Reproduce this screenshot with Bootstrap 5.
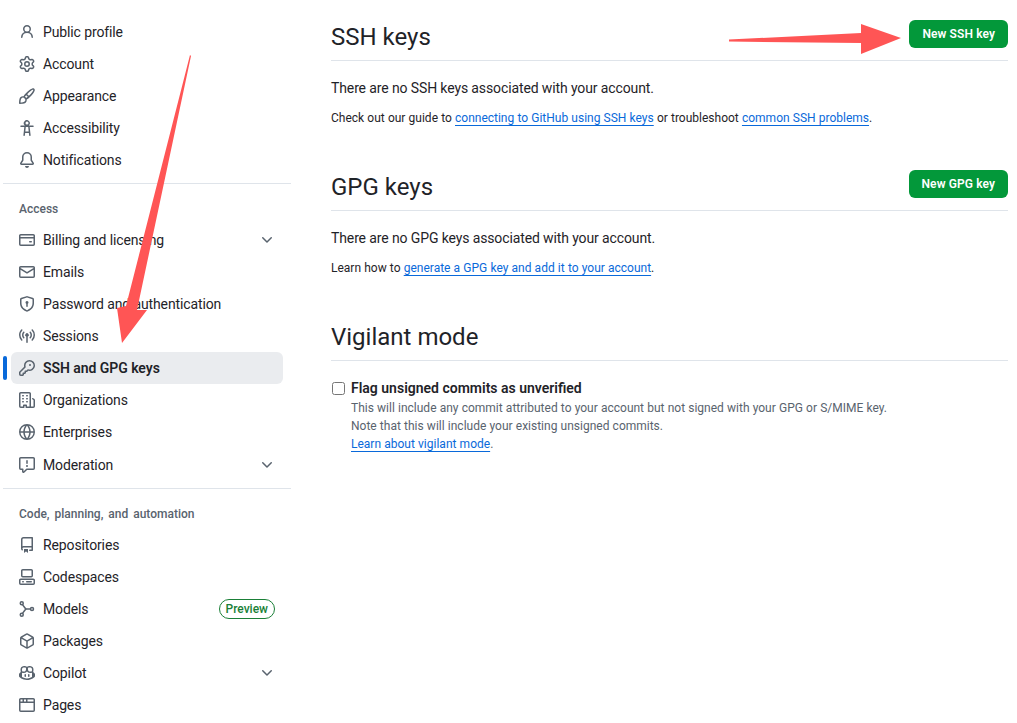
<!DOCTYPE html>
<html lang="en">
<head>
    <title>SSH and GPG keys</title>
    <meta charset="utf-8">
    <meta name="viewport" content="width=device-width, initial-scale=1">
    <link href="https://cdn.jsdelivr.net/npm/bootstrap@5.3.0/dist/css/bootstrap.min.css" rel="stylesheet">
    <style>
    body {
        font-family: Roboto, "Liberation Sans", sans-serif;
        font-size: 14px;
        line-height: 21px;
        letter-spacing: -0.12px;
        color: #1f2328;
        background: #fff;
    }
    .page-wrap {
        position: relative;
        height: 723px;
        overflow: hidden;
    }
    .side-col {
        width: 288px;
        margin-left: 3px;
        padding-top: 16px;
        flex: none;
    }
    .main-col {
        margin-left: 40px;
        margin-right: 9px;
        padding-top: 20px;
        min-width: 0;
        flex: 1;
    }
    .side-item {
        height: 32px;
        margin: 0 8px;
        padding: 0 8px;
        border-radius: 6px;
        color: #1f2328;
        text-decoration: none;
        position: relative;
    }
    .side-item svg.side-ico { fill: #59636e; flex: none; margin-right: 8px; }
    .side-item svg.side-chev { fill: #59636e; margin-left: auto; }
    .side-item.side-on { background: #eaecef; font-weight: 600; letter-spacing: -0.05px; }
    .side-item.side-on::before {
        content: "";
        position: absolute;
        left: -8px;
        top: 4px;
        width: 4px;
        height: 24px;
        border-radius: 6px;
        background: #0969da;
    }
    .side-gap { margin-top: 1px; }
    .side-rule { height: 1px; background: #dfe4ea; margin: 7px 0 0; }
    .side-head {
        font-size: 12px;
        font-weight: 500;
        line-height: 18px;
        letter-spacing: 0;
        word-spacing: 2px;
        color: #59636e;
        padding: 16px 16px 6px;
    }
    .side-preview {
        margin-left: auto;
        height: 20px;
        line-height: 18px;
        padding: 0 6px;
        border: 1px solid #1a7f37;
        border-radius: 20px;
        color: #1a7f37;
        font-size: 12px;
        font-weight: 500;
        letter-spacing: 0;
    }
    .sec-head {
        padding-bottom: 12px;
        border-bottom: 1px solid #dfe4ea;
    }
    .sec-head h2 {
        font-size: 24px;
        line-height: 28px;
        font-weight: 400;
        letter-spacing: 0;
        margin: 0 0 -3px;
        padding-top: 3px;
    }
    .sec-btn {
        height: 28px;
        line-height: 28px;
        padding: 0 13px;
        border: 0;
        border-radius: 6px;
        background: #03983a;
        color: #fff;
        font-size: 12px;
        font-weight: 600;
        letter-spacing: .1px;
    }
    .sec-text { margin: 17px 0 0; }
    .sec-sub { font-size: 12px; line-height: 18px; letter-spacing: 0; word-spacing: .2px; margin: 10px 0 0; }
    .sec-link {
        color: #0969da;
        text-decoration: underline;
        text-underline-offset: 3px;
    }
    .sec-two { margin-top: 43px; }
    .sec-three { margin-top: 43px; }
    .vig-row { margin-top: 17px; }
    .vig-check {
        width: 13px;
        height: 13px;
        margin: 4px 6px 0 1px;
        flex: none;
    }
    .vig-label { font-weight: 600; letter-spacing: 0; }
    .vig-note { font-size: 12px; line-height: 18px; letter-spacing: 0; word-spacing: .2px; color: #59636e; }
    .mark-layer {
        position: absolute;
        left: 0;
        top: 0;
        pointer-events: none;
    }
    </style>
</head>
<body>
<svg width="0" height="0" class="position-absolute">
    <defs>
        <path id="i-chev" d="M12.78 5.22a.749.749 0 0 1 0 1.06l-4.25 4.25a.749.749 0 0 1-1.06 0L3.22 6.28a.749.749 0 1 1 1.06-1.06L8 8.939l3.72-3.719a.749.749 0 0 1 1.06 0Z"/>
    </defs>
</svg>
<div class="page-wrap d-flex">
    <nav class="side-col">
        <a class="side-item d-flex align-items-center" href="#"><svg class="side-ico" width="16" height="16" viewBox="0 0 16 16"><path d="M10.561 8.073a6.005 6.005 0 0 1 3.432 5.142.75.75 0 1 1-1.498.07 4.5 4.5 0 0 0-8.99 0 .75.75 0 1 1-1.498-.07 6.004 6.004 0 0 1 3.431-5.142 3.999 3.999 0 1 1 5.123 0ZM10.5 5a2.5 2.5 0 1 0-5 0 2.5 2.5 0 0 0 5 0Z"/></svg>Public profile</a>
        <a class="side-item d-flex align-items-center" href="#"><svg class="side-ico" width="16" height="16" viewBox="0 0 16 16"><path d="M8 0a8.2 8.2 0 0 1 .701.031C9.444.095 9.99.645 10.16 1.29l.288 1.107c.018.066.079.158.212.224.231.114.454.243.668.386.123.082.233.09.299.071l1.103-.303c.644-.176 1.392.021 1.82.63.27.385.506.792.704 1.218.315.675.111 1.422-.364 1.891l-.814.806c-.049.048-.098.147-.088.294.016.257.016.515 0 .772-.01.147.038.246.088.294l.814.806c.475.469.679 1.216.364 1.891a7.977 7.977 0 0 1-.704 1.217c-.428.61-1.176.807-1.82.63l-1.102-.302c-.067-.019-.177-.011-.3.071a5.909 5.909 0 0 1-.668.386c-.133.066-.194.158-.211.224l-.29 1.106c-.168.646-.715 1.196-1.458 1.26a8.006 8.006 0 0 1-1.402 0c-.743-.064-1.289-.614-1.458-1.26l-.289-1.106c-.018-.066-.079-.158-.212-.224a5.738 5.738 0 0 1-.668-.386c-.123-.082-.233-.09-.299-.071l-1.103.303c-.644.176-1.392-.021-1.82-.63a8.12 8.12 0 0 1-.704-1.218c-.315-.675-.111-1.422.363-1.891l.815-.806c.05-.048.098-.147.088-.294a6.214 6.214 0 0 1 0-.772c.01-.147-.038-.246-.088-.294l-.815-.806C.635 6.045.431 5.298.746 4.623a7.92 7.92 0 0 1 .704-1.217c.428-.61 1.176-.807 1.82-.63l1.102.302c.067.019.177.011.3-.071.214-.143.437-.272.668-.386.133-.066.194-.158.211-.224l.29-1.106C6.009.645 6.556.095 7.299.03 7.53.01 7.764 0 8 0Zm-.571 1.525c-.036.003-.108.036-.137.146l-.289 1.105c-.147.561-.549.967-.998 1.189-.173.086-.34.183-.5.29-.417.278-.97.423-1.529.27l-1.103-.303c-.109-.03-.175.016-.195.045-.22.312-.412.644-.573.99-.014.031-.021.11.059.19l.815.806c.411.406.562.957.53 1.456a4.709 4.709 0 0 0 0 .582c.032.499-.119 1.05-.53 1.456l-.815.806c-.081.08-.073.159-.059.19.162.346.353.677.573.989.02.03.085.076.195.046l1.102-.303c.56-.153 1.113-.008 1.53.27.161.107.328.204.501.29.447.222.85.629.997 1.189l.289 1.105c.029.109.101.143.137.146a6.6 6.6 0 0 0 1.142 0c.036-.003.108-.036.137-.146l.289-1.105c.147-.561.549-.967.998-1.189.173-.086.34-.183.5-.29.417-.278.97-.423 1.529-.27l1.103.303c.109.029.175-.016.195-.045.22-.313.411-.644.573-.99.014-.031.021-.11-.059-.19l-.815-.806c-.411-.406-.562-.957-.53-1.456a4.709 4.709 0 0 0 0-.582c-.032-.499.119-1.05.53-1.456l.815-.806c.081-.08.073-.159.059-.19a6.464 6.464 0 0 0-.573-.989c-.02-.03-.085-.076-.195-.046l-1.102.303c-.56.153-1.113.008-1.53-.27a4.44 4.44 0 0 0-.501-.29c-.447-.222-.85-.629-.997-1.189l-.289-1.105c-.029-.11-.101-.143-.137-.146a6.6 6.6 0 0 0-1.142 0ZM11 8a3 3 0 1 1-6 0 3 3 0 0 1 6 0ZM9.5 8a1.5 1.5 0 1 0-3.001.001A1.5 1.5 0 0 0 9.5 8Z"/></svg>Account</a>
        <a class="side-item d-flex align-items-center" href="#"><svg class="side-ico" width="16" height="16" viewBox="0 0 16 16"><path d="M11.134 1.535c.7-.509 1.416-.942 2.076-1.155.649-.21 1.463-.267 2.069.34.603.601.568 1.411.368 2.07-.202.668-.624 1.39-1.125 2.096-1.011 1.424-2.496 2.987-3.775 4.249-1.098 1.084-2.132 1.839-3.04 2.3a3.744 3.744 0 0 1-1.055 3.217c-.431.431-1.065.691-1.657.861-.614.177-1.294.287-1.914.357A21.151 21.151 0 0 1 .797 16H.743l.007-.75H.749L.742 16a.75.75 0 0 1-.743-.742l.748-.008-.749.007v-.054a21.25 21.25 0 0 1 .13-2.284c.067-.647.187-1.287.358-1.914.17-.591.43-1.226.86-1.657a3.746 3.746 0 0 1 3.227-1.054c.466-.893 1.225-1.907 2.314-2.982 1.271-1.255 2.833-2.75 4.245-3.777ZM1.62 13.089c-.051.464-.086.929-.104 1.395.466-.018.932-.053 1.396-.104a10.511 10.511 0 0 0 1.668-.309c.526-.151.856-.325 1.011-.48a2.25 2.25 0 1 0-3.182-3.182c-.155.155-.329.485-.48 1.01a10.515 10.515 0 0 0-.309 1.67Zm10.396-10.34c-1.224.89-2.605 2.189-3.822 3.384l1.718 1.718c1.21-1.205 2.51-2.597 3.387-3.833.47-.662.78-1.227.912-1.662.134-.444.032-.551.009-.575h-.001V1.78c-.014-.014-.113-.113-.548.027-.432.14-.995.462-1.655.94Zm-4.832 7.266-.001.001a9.859 9.859 0 0 0 1.63-1.142L7.155 7.216a9.7 9.7 0 0 0-1.161 1.607c.482.302.889.71 1.19 1.192Z"/></svg>Appearance</a>
        <a class="side-item d-flex align-items-center" href="#"><svg class="side-ico" width="16" height="16" viewBox="0 0 16 16"><path d="M9.923 5.302c.063.063.122.129.178.198H14A.75.75 0 0 1 14 7h-3.3l.578 5.163.362 2.997a.75.75 0 0 1-1.49.18L9.868 13H6.132l-.282 2.34a.75.75 0 0 1-1.49-.18l.362-2.997L5.3 7H2a.75.75 0 0 1 0-1.5h3.9a2.999 2.999 0 1 1 4.023-.198ZM6.8 7l-.49 4.5h3.38L9.2 7ZM8 4.5a1.5 1.5 0 1 0 0-3 1.5 1.5 0 0 0 0 3Z"/></svg>Accessibility</a>
        <a class="side-item d-flex align-items-center" href="#"><svg class="side-ico" width="16" height="16" viewBox="0 0 16 16"><path d="M8 16a2 2 0 0 0 1.985-1.75c.017-.137-.097-.25-.235-.25h-3.5c-.138 0-.252.113-.235.25A2 2 0 0 0 8 16ZM3 5a5 5 0 0 1 10 0v2.947c0 .05.015.098.042.139l1.703 2.555A1.519 1.519 0 0 1 13.482 13H2.518a1.516 1.516 0 0 1-1.263-2.36l1.703-2.554A.255.255 0 0 0 3 7.947Zm5-3.5A3.5 3.5 0 0 0 4.5 5v2.947c0 .346-.102.683-.294.97l-1.703 2.556a.017.017 0 0 0-.003.01l.001.006c0 .002.002.004.004.006l.006.004.007.001h10.964l.007-.001.006-.004.004-.006.001-.007a.017.017 0 0 0-.003-.01l-1.703-2.554a1.745 1.745 0 0 1-.294-.97V5A3.5 3.5 0 0 0 8 1.5Z"/></svg>Notifications</a>
        <div class="side-rule"></div>
        <div class="side-head">Access</div>
        <a class="side-item d-flex align-items-center" href="#"><svg class="side-ico" width="16" height="16" viewBox="0 0 16 16"><path d="M10.75 9a.75.75 0 0 0 0 1.5h1.5a.75.75 0 0 0 0-1.5h-1.5ZM0 3.75C0 2.784.784 2 1.75 2h12.5c.966 0 1.75.784 1.75 1.75v8.5A1.75 1.75 0 0 1 14.25 14H1.75A1.75 1.75 0 0 1 0 12.25ZM14.5 6.5h-13v5.75c0 .138.112.25.25.25h12.5a.25.25 0 0 0 .25-.25Zm0-2.75a.25.25 0 0 0-.25-.25H1.75a.25.25 0 0 0-.25.25V5h13Z"/></svg>Billing and licensing<svg class="side-chev" width="16" height="16" viewBox="0 0 16 16"><use href="#i-chev"/></svg></a>
        <a class="side-item d-flex align-items-center" href="#"><svg class="side-ico" width="16" height="16" viewBox="0 0 16 16"><path d="M1.75 2h12.5c.966 0 1.75.784 1.75 1.75v8.5A1.75 1.75 0 0 1 14.25 14H1.75A1.75 1.75 0 0 1 0 12.25v-8.5C0 2.784.784 2 1.75 2ZM1.5 12.251c0 .138.112.25.25.25h12.5a.25.25 0 0 0 .25-.25V5.809L8.38 9.397a.75.75 0 0 1-.76 0L1.5 5.809v6.442Zm13-8.181v-.32a.25.25 0 0 0-.25-.25H1.75a.25.25 0 0 0-.25.25v.32L8 7.88Z"/></svg>Emails</a>
        <a class="side-item d-flex align-items-center" href="#"><svg class="side-ico" width="16" height="16" viewBox="0 0 16 16"><path d="m8.533.133 5.25 1.68A1.75 1.75 0 0 1 15 3.48V7c0 1.566-.32 3.182-1.303 4.682-.983 1.498-2.585 2.813-5.032 3.855a1.697 1.697 0 0 1-1.33 0c-2.447-1.042-4.049-2.357-5.032-3.855C1.32 10.182 1 8.566 1 7V3.48a1.75 1.75 0 0 1 1.217-1.667l5.25-1.68a1.748 1.748 0 0 1 1.066 0Zm-.61 1.429.001.001-5.25 1.68a.251.251 0 0 0-.174.237V7c0 1.36.275 2.666 1.057 3.859.784 1.194 2.121 2.342 4.366 3.298a.196.196 0 0 0 .154 0c2.245-.957 3.582-2.103 4.366-3.297C13.225 9.666 13.5 8.358 13.5 7V3.48a.25.25 0 0 0-.174-.238l-5.25-1.68a.25.25 0 0 0-.153 0ZM9.5 6.5c0 .536-.286 1.032-.75 1.3v2.45a.75.75 0 0 1-1.5 0V7.8A1.5 1.5 0 1 1 9.5 6.5Z"/></svg>Password and authentication</a>
        <a class="side-item d-flex align-items-center" href="#"><svg class="side-ico" width="16" height="16" viewBox="0 0 16 16"><path d="M8.75 8.582v5.668a.75.75 0 0 1-1.5 0V8.582a1.75 1.75 0 1 1 1.5 0Zm3.983-7.125a.75.75 0 0 1 1.06.026A7.976 7.976 0 0 1 16 7a7.976 7.976 0 0 1-2.207 5.517.75.75 0 1 1-1.086-1.034A6.474 6.474 0 0 0 14.5 7a6.474 6.474 0 0 0-1.793-4.483.75.75 0 0 1 .026-1.06Zm-9.466 0c.3.286.312.76.026 1.06A6.474 6.474 0 0 0 1.5 7a6.47 6.47 0 0 0 1.793 4.483.75.75 0 0 1-1.086 1.034A7.973 7.973 0 0 1 0 7c0-2.136.84-4.079 2.207-5.517a.75.75 0 0 1 1.06-.026Zm8.556 2.321A4.988 4.988 0 0 1 13 7a4.988 4.988 0 0 1-1.177 3.222.75.75 0 1 1-1.146-.967A3.487 3.487 0 0 0 11.5 7c0-.86-.309-1.645-.823-2.255a.75.75 0 0 1 1.146-.967Zm-6.492.958A3.48 3.48 0 0 0 4.5 7a3.48 3.48 0 0 0 .823 2.255.75.75 0 0 1-1.146.967A4.981 4.981 0 0 1 3 7a4.982 4.982 0 0 1 1.188-3.236.75.75 0 1 1 1.143.97Z"/></svg>Sessions</a>
        <a class="side-item side-on d-flex align-items-center" href="#"><svg class="side-ico" width="16" height="16" viewBox="0 0 16 16"><path d="M10.5 0a5.499 5.499 0 1 1-1.288 10.848l-.932.932a.749.749 0 0 1-.53.22H7v.75a.749.749 0 0 1-.22.53l-.5.5a.749.749 0 0 1-.53.22H5v.75a.749.749 0 0 1-.22.53l-.5.5a.749.749 0 0 1-.53.22h-2A1.75 1.75 0 0 1 0 14.25v-2c0-.199.079-.389.22-.53l4.932-4.932A5.5 5.5 0 0 1 10.5 0Zm-4 5.5c-.001.431.069.86.205 1.269a.75.75 0 0 1-.181.768L1.5 12.56v1.69c0 .138.112.25.25.25h1.69l.06-.06v-1.19a.75.75 0 0 1 .75-.75h1.19l.06-.06v-1.19a.75.75 0 0 1 .75-.75h1.19l1.023-1.025a.75.75 0 0 1 .768-.18A4 4 0 1 0 6.5 5.5ZM11 6a1 1 0 1 1 0-2 1 1 0 0 1 0 2Z"/></svg>SSH and GPG keys</a>
        <a class="side-item d-flex align-items-center" href="#"><svg class="side-ico" width="16" height="16" viewBox="0 0 16 16"><path d="M1.75 16A1.75 1.75 0 0 1 0 14.25V1.75C0 .784.784 0 1.75 0h8.5C11.216 0 12 .784 12 1.75v12.5c0 .085-.006.168-.018.25h2.268a.25.25 0 0 0 .25-.25V8.285a.25.25 0 0 0-.111-.208l-1.055-.703a.749.749 0 1 1 .832-1.248l1.055.703c.487.325.779.871.779 1.456v5.965A1.75 1.75 0 0 1 14.25 16h-3.5a.766.766 0 0 1-.197-.026c-.099.017-.2.026-.303.026h-3a.75.75 0 0 1-.75-.75V14h-1v1.25a.75.75 0 0 1-.75.75Zm-.25-1.75c0 .138.112.25.25.25H4v-1.25a.75.75 0 0 1 .75-.75h2.5a.75.75 0 0 1 .75.75v1.25h2.25a.25.25 0 0 0 .25-.25V1.75a.25.25 0 0 0-.25-.25h-8.5a.25.25 0 0 0-.25.25ZM3.75 6h.5a.75.75 0 0 1 0 1.5h-.5a.75.75 0 0 1 0-1.5ZM3 3.75A.75.75 0 0 1 3.75 3h.5a.75.75 0 0 1 0 1.5h-.5A.75.75 0 0 1 3 3.75Zm4 3A.75.75 0 0 1 7.75 6h.5a.75.75 0 0 1 0 1.5h-.5A.75.75 0 0 1 7 6.75ZM7.75 3h.5a.75.75 0 0 1 0 1.5h-.5a.75.75 0 0 1 0-1.5ZM3 9.75A.75.75 0 0 1 3.75 9h.5a.75.75 0 0 1 0 1.5h-.5A.75.75 0 0 1 3 9.75ZM7.75 9h.5a.75.75 0 0 1 0 1.5h-.5a.75.75 0 0 1 0-1.5Z"/></svg>Organizations</a>
        <a class="side-item d-flex align-items-center" href="#"><svg class="side-ico" width="16" height="16" viewBox="0 0 16 16"><path d="M8 0a8 8 0 1 1 0 16A8 8 0 0 1 8 0ZM5.78 8.75a9.64 9.64 0 0 0 1.363 4.177c.255.426.542.832.857 1.215.245-.296.551-.705.857-1.215A9.64 9.64 0 0 0 10.22 8.75Zm4.44-1.5a9.64 9.64 0 0 0-1.363-4.177c-.307-.51-.612-.919-.857-1.215a9.927 9.927 0 0 0-.857 1.215A9.64 9.64 0 0 0 5.78 7.25Zm-5.944 1.5H1.543a6.507 6.507 0 0 0 4.666 5.5c-.123-.181-.24-.365-.352-.552-.715-1.192-1.437-2.874-1.581-4.948Zm-2.733-1.5h2.733c.144-2.074.866-3.756 1.58-4.948.12-.197.237-.381.353-.552a6.507 6.507 0 0 0-4.666 5.5Zm10.181 1.5c-.144 2.074-.866 3.756-1.58 4.948-.12.197-.237.381-.353.552a6.507 6.507 0 0 0 4.666-5.5Zm2.733-1.5a6.507 6.507 0 0 0-4.666-5.5c.123.181.24.365.353.552.714 1.192 1.436 2.874 1.58 4.948Z"/></svg>Enterprises</a>
        <a class="side-item side-gap d-flex align-items-center" href="#"><svg class="side-ico" width="16" height="16" viewBox="0 0 16 16"><path d="M0 1.75C0 .784.784 0 1.75 0h12.5C15.216 0 16 .784 16 1.75v9.5A1.75 1.75 0 0 1 14.25 13H8.06l-2.573 2.573A1.458 1.458 0 0 1 3 14.543V13H1.75A1.75 1.75 0 0 1 0 11.25Zm1.75-.25a.25.25 0 0 0-.25.25v9.5c0 .138.112.25.25.25h2a.75.75 0 0 1 .75.75v2.19l2.72-2.72a.749.749 0 0 1 .53-.22h6.5a.25.25 0 0 0 .25-.25v-9.5a.25.25 0 0 0-.25-.25Zm7 2.25v2.5a.75.75 0 0 1-1.5 0v-2.5a.75.75 0 0 1 1.5 0ZM9 9a1 1 0 1 1-2 0 1 1 0 0 1 2 0Z"/></svg>Moderation<svg class="side-chev" width="16" height="16" viewBox="0 0 16 16"><use href="#i-chev"/></svg></a>
        <div class="side-rule"></div>
        <div class="side-head">Code, planning, and automation</div>
        <a class="side-item d-flex align-items-center" href="#"><svg class="side-ico" width="16" height="16" viewBox="0 0 16 16"><path d="M2 2.5A2.5 2.5 0 0 1 4.5 0h8.75a.75.75 0 0 1 .75.75v12.5a.75.75 0 0 1-.75.75h-2.5a.75.75 0 0 1 0-1.5h1.75v-2h-8a1 1 0 0 0-.714 1.7.75.75 0 1 1-1.072 1.05A2.495 2.495 0 0 1 2 11.5Zm10.5-1h-8a1 1 0 0 0-1 1v6.708A2.486 2.486 0 0 1 4.5 9h8ZM5 12.25a.25.25 0 0 1 .25-.25h3.5a.25.25 0 0 1 .25.25v3.25a.25.25 0 0 1-.4.2l-1.45-1.087a.249.249 0 0 0-.3 0L5.4 15.7a.25.25 0 0 1-.4-.2Z"/></svg>Repositories</a>
        <a class="side-item d-flex align-items-center" href="#"><svg class="side-ico" width="16" height="16" viewBox="0 0 16 16"><path d="M0 11.25c0-.966.784-1.75 1.75-1.75h12.5c.966 0 1.75.784 1.75 1.75v3A1.75 1.75 0 0 1 14.25 16H1.75A1.75 1.75 0 0 1 0 14.25Zm2-9.5C2 .784 2.784 0 3.75 0h8.5C13.216 0 14 .784 14 1.75v5a1.75 1.75 0 0 1-1.75 1.75h-8.5A1.75 1.75 0 0 1 2 6.75Zm1.75-.25a.25.25 0 0 0-.25.25v5c0 .138.112.25.25.25h8.5a.25.25 0 0 0 .25-.25v-5a.25.25 0 0 0-.25-.25Zm-2 9.5a.25.25 0 0 0-.25.25v3c0 .138.112.25.25.25h12.5a.25.25 0 0 0 .25-.25v-3a.25.25 0 0 0-.25-.25ZM7 12.75a.75.75 0 0 1 .75-.75h4.5a.75.75 0 0 1 0 1.5h-4.5a.75.75 0 0 1-.75-.75Zm-4 0a.75.75 0 0 1 .75-.75h.5a.75.75 0 0 1 0 1.5h-.5a.75.75 0 0 1-.75-.75Z"/></svg>Codespaces</a>
        <a class="side-item d-flex align-items-center" href="#"><svg class="side-ico" width="16" height="16" viewBox="0 0 16 16"><g fill="none" stroke="#59636e" stroke-width="1.5"><circle cx="2.75" cy="2.25" r="1.5"/><circle cx="2.75" cy="13.75" r="1.5"/><circle cx="13" cy="8" r="1.5"/><path d="M3.5 3.6 6 7c.4.6.9 1 1.6 1h3.9M3.5 12.4 6 9c.4-.6.9-1 1.6-1"/></g></svg>Models<span class="side-preview">Preview</span></a>
        <a class="side-item d-flex align-items-center" href="#"><svg class="side-ico" width="16" height="16" viewBox="0 0 16 16"><path d="m8.878.392 5.25 3.045c.54.314.872.89.872 1.514v6.098a1.75 1.75 0 0 1-.872 1.514l-5.25 3.045a1.75 1.75 0 0 1-1.756 0l-5.25-3.045A1.75 1.75 0 0 1 1 11.049V4.951c0-.624.332-1.201.872-1.514L7.122.392a1.75 1.75 0 0 1 1.756 0ZM7.875 1.69l-4.63 2.685L8 7.133l4.755-2.758-4.63-2.685a.248.248 0 0 0-.25 0ZM2.5 5.677v5.372c0 .09.047.171.125.216l4.625 2.683V8.432Zm6.25 8.271 4.625-2.683a.25.25 0 0 0 .125-.216V5.677L8.75 8.432Z"/></svg>Packages</a>
        <a class="side-item d-flex align-items-center" href="#"><svg class="side-ico" width="16" height="16" viewBox="0 0 16 16"><path d="M7.998 15.035c-4.562 0-7.873-2.914-7.998-3.749V9.338c.085-.628.677-1.686 1.588-2.065.013-.07.024-.143.036-.218.029-.183.06-.384.126-.612-.201-.508-.254-1.084-.254-1.656 0-.87.128-1.769.693-2.484.579-.733 1.494-1.124 2.724-1.261 1.206-.134 2.262.034 2.944.765.05.053.096.108.139.165.044-.057.094-.112.143-.165.682-.731 1.738-.899 2.944-.765 1.23.137 2.145.528 2.724 1.261.566.715.693 1.614.693 2.484 0 .572-.053 1.148-.254 1.656.066.228.098.429.126.612.012.076.024.148.037.218.924.385 1.522 1.471 1.591 2.095v1.872c0 .766-3.351 3.795-8.002 3.795Zm0-1.485c2.28 0 4.584-1.11 5.002-1.433V7.862l-.023-.116c-.49.21-1.075.291-1.727.291-1.146 0-2.059-.327-2.71-.991A3.222 3.222 0 0 1 8 6.303a3.24 3.24 0 0 1-.544.743c-.65.664-1.563.991-2.71.991-.652 0-1.236-.081-1.727-.291l-.023.116v4.255c.419.323 2.722 1.433 5.002 1.433ZM6.762 2.83c-.193-.206-.637-.413-1.682-.297-1.019.113-1.479.404-1.713.7-.247.312-.369.789-.369 1.554 0 .793.129 1.171.308 1.371.162.181.519.379 1.442.379.853 0 1.339-.235 1.638-.54.315-.322.527-.827.617-1.553.117-.935-.037-1.395-.241-1.614Zm4.155-.297c-1.044-.116-1.488.091-1.681.297-.204.219-.359.679-.242 1.614.091.726.303 1.231.618 1.553.299.305.784.54 1.638.54.922 0 1.28-.198 1.442-.379.179-.2.308-.578.308-1.371 0-.765-.123-1.242-.37-1.554-.233-.296-.693-.587-1.713-.7ZM6.25 9.037a.75.75 0 0 1 .75.75v1.501a.75.75 0 0 1-1.5 0V9.787a.75.75 0 0 1 .75-.75Zm4.25.75v1.501a.75.75 0 0 1-1.5 0V9.787a.75.75 0 0 1 1.5 0Z"/></svg>Copilot<svg class="side-chev" width="16" height="16" viewBox="0 0 16 16"><use href="#i-chev"/></svg></a>
        <a class="side-item d-flex align-items-center" href="#"><svg class="side-ico" width="16" height="16" viewBox="0 0 16 16"><path d="M0 2.75C0 1.784.784 1 1.75 1h12.5c.966 0 1.75.784 1.75 1.75v10.5A1.75 1.75 0 0 1 14.25 15H1.75A1.75 1.75 0 0 1 0 13.25ZM14.5 6h-13v7.25c0 .138.112.25.25.25h12.5a.25.25 0 0 0 .25-.25Zm-6-3.5v2h6V2.75a.25.25 0 0 0-.25-.25ZM5 2.5v2h2v-2Zm-3.25 0a.25.25 0 0 0-.25.25V4.5h2v-2Z"/></svg>Pages</a>
    </nav>
    <main class="main-col">
        <section>
            <div class="sec-head d-flex justify-content-between align-items-center">
                <h2>SSH keys</h2>
                <button class="sec-btn" type="button">New SSH key</button>
            </div>
            <p class="sec-text">There are no SSH keys associated with your account.</p>
            <p class="sec-sub">Check out our guide to <a class="sec-link" href="#">connecting to GitHub using SSH keys</a> or troubleshoot <a class="sec-link" href="#">common SSH problems</a>.</p>
        </section>
        <section class="sec-two">
            <div class="sec-head d-flex justify-content-between align-items-center">
                <h2>GPG keys</h2>
                <button class="sec-btn" type="button">New GPG key</button>
            </div>
            <p class="sec-text">There are no GPG keys associated with your account.</p>
            <p class="sec-sub">Learn how to <a class="sec-link" href="#">generate a GPG key and add it to your account</a>.</p>
        </section>
        <section class="sec-three">
            <div class="sec-head d-flex justify-content-between align-items-center">
                <h2>Vigilant mode</h2>
            </div>
            <div class="vig-row d-flex align-items-start">
                <input class="vig-check" type="checkbox" id="vigilant">
                <div>
                    <label class="vig-label d-block" for="vigilant">Flag unsigned commits as unverified</label>
                    <div class="vig-note">This will include any commit attributed to your account but not signed with your GPG or S/MIME key.<br>Note that this will include your existing unsigned commits.<br><a class="sec-link" href="#">Learn about vigilant mode</a>.</div>
                </div>
            </div>
        </section>
    </main>
    <svg class="mark-layer" width="1017" height="723" viewBox="0 0 1017 723">
        <polygon fill="#ff5555" points="190,55 191,56 137,310 147,310 122,343 117,308 126,306"/>
        <polygon fill="#ff5555" points="729,39.5 861,33 861,24 901,38 861,54 861,43 729,41.5"/>
    </svg>
</div>
<script src="https://cdn.jsdelivr.net/npm/bootstrap@5.3.0/dist/js/bootstrap.bundle.min.js"></script>
</body>
</html>
